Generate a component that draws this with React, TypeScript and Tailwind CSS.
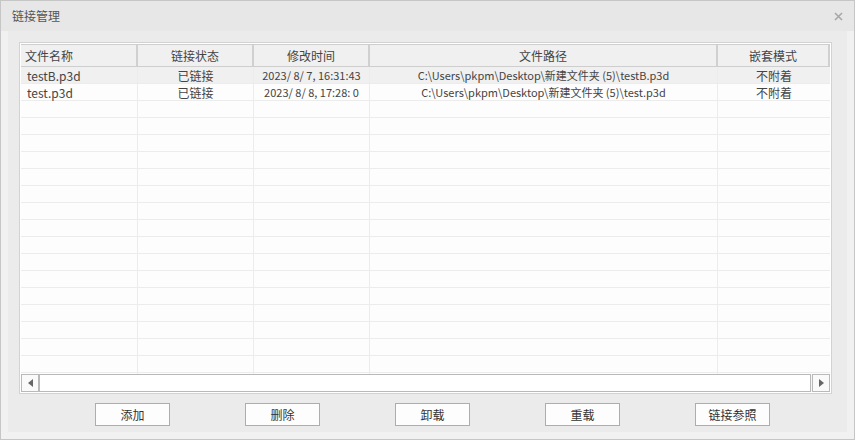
import React from "react";

type Row = {
  name: string;
  status: string;
  time: string;
  path: string;
  mode: string;
};

const rows: Row[] = [
  {
    name: "testB.p3d",
    status: "已链接",
    time: "2023/ 8/ 7, 16:31:43",
    path: "C:\\Users\\pkpm\\Desktop\\新建文件夹 (5)\\testB.p3d",
    mode: "不附着",
  },
  {
    name: "test.p3d",
    status: "已链接",
    time: "2023/ 8/ 8, 17:28: 0",
    path: "C:\\Users\\pkpm\\Desktop\\新建文件夹 (5)\\test.p3d",
    mode: "不附着",
  },
];

const headers = ["文件名称", "链接状态", "修改时间", "文件路径", "嵌套模式"];
const buttons = ["添加", "删除", "卸载", "重载", "链接参照"];

const cols = "grid grid-cols-[117px_116px_116px_348px_1fr]";

export default function App() {
  // pad out with empty rows to fill the list area
  const filled: (Row | null)[] = [...rows];
  while (filled.length < 19) filled.push(null);

  return (
    <div
      className="w-[855px] h-[440px] flex flex-col border border-[#c6c6c6] bg-[#f1f1f1] text-[#444]"
      style={{ fontFamily: '"Noto Sans CJK SC", "Noto Sans", sans-serif' }}
    >
      {/* title bar */}
      <div className="h-[30px] shrink-0 flex items-center justify-between bg-[#e7e7e7] pl-[11px] pr-[11px]">
        <span className="text-[12px] text-[#555]">链接管理</span>
        <svg width="9" height="9" viewBox="0 0 9 9" className="mt-[1px]">
          <path d="M1 1 L8 8 M8 1 L1 8" stroke="#a8a8a8" strokeWidth="1.6" />
        </svg>
      </div>

      {/* body */}
      <div className="flex-1 px-[7px] pb-[7px]">
        <div className="h-full bg-[#ebebeb] pt-[11px] pl-[11px]">
          {/* list */}
          <div className="w-[813px] h-[352px] flex flex-col border border-[#d2d2d2] bg-white pt-px px-px">
            <div className={`${cols} h-[23px] shrink-0 bg-[#f0f0f0] border-y border-[#cecece] text-[12px]`}>
              {headers.map((h, i) => (
                <div
                  key={h}
                  className={`flex items-center leading-none border-r-2 border-[#d0d0d0] ${
                    i === 0 ? "pl-[4px]" : "justify-center"
                  }`}
                >
                  {h}
                </div>
              ))}
            </div>
            <div className="flex-1 overflow-hidden">
              {filled.map((r, i) => (
                <div
                  key={i}
                  className={`${cols} h-[17px] border-b border-[#ececec] text-[12px] leading-none ${
                    i === 0 ? "bg-[#f0f0f0]" : "bg-[#fdfdfd]"
                  }`}
                >
                  <div className="flex items-center pl-[6px] pt-px border-r border-[#ececec]">{r?.name}</div>
                  <div className="flex items-center justify-center pt-px border-r border-[#ececec]">{r?.status}</div>
                  <div className="flex items-center justify-center pt-px border-r border-[#ececec] text-[11px]">{r?.time}</div>
                  <div className="flex items-center justify-center pt-px border-r border-[#ececec] text-[11px] whitespace-pre">{r?.path}</div>
                  <div className="flex items-center justify-center pt-px">{r?.mode}</div>
                </div>
              ))}
            </div>
            {/* horizontal scrollbar */}
            <div className="h-[18px] shrink-0 flex bg-[#f6f6f6] mb-px">
              <div className="w-[18px] border border-[#b9b9b9] bg-[#fafafa] flex items-center justify-center">
                <svg width="5" height="8" viewBox="0 0 5 8">
                  <path d="M5 0 L0 4 L5 8 Z" fill="#666" />
                </svg>
              </div>
              <div className="flex-1 border border-[#b9b9b9] bg-white" />
              <div className="w-[18px] ml-px border border-[#b9b9b9] bg-[#fafafa] flex items-center justify-center">
                <svg width="5" height="8" viewBox="0 0 5 8">
                  <path d="M0 0 L5 4 L0 8 Z" fill="#666" />
                </svg>
              </div>
            </div>
          </div>

          {/* buttons */}
          <div className="flex gap-[75px] mt-[9px] pl-[76px]">
            {buttons.map((b) => (
              <button
                key={b}
                type="button"
                className="w-[75px] h-[23px] border border-[#adadad] bg-[#fdfdfd] text-[12px] text-[#333] leading-none"
              >
                {b}
              </button>
            ))}
          </div>
        </div>
      </div>
    </div>
  );
}
